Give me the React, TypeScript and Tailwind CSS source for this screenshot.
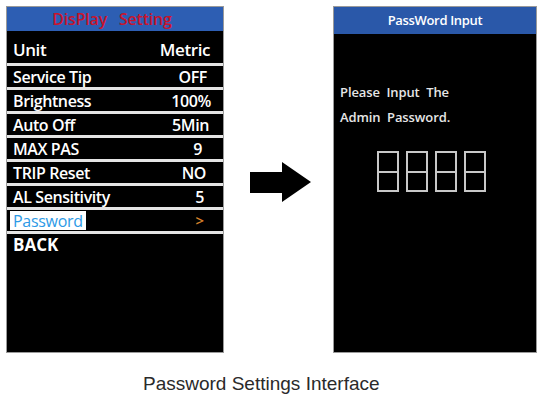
const ROWS = [
  { label: "Service Tip", value: "OFF", pr: "pr-[16px]" },
  { label: "Brightness", value: "100%", pr: "pr-[12px]" },
  { label: "Auto Off", value: "5Min", pr: "pr-[14px]" },
  { label: "MAX PAS", value: "9", pr: "pr-[21px]" },
  { label: "TRIP Reset", value: "NO", pr: "pr-[17px]" },
  { label: "AL Sensitivity", value: "5", pr: "pr-[19px]" },
];

function DigitBox() {
  return (
    <div className="w-[22px] h-[41px] border-2 border-[#c8c8c8] flex flex-col">
      <div className="flex-1 border-b-2 border-[#c8c8c8]" />
      <div className="flex-1" />
    </div>
  );
}

export default function App() {
  return (
    <div className="w-[550px] h-[404px] bg-white overflow-hidden" style={{ fontFamily: '"Open Sans", "Noto Sans", sans-serif' }}>
      <div className="flex items-start pt-[6px] pl-[6px]">
        {/* left screen */}
        <div className="w-[218px] h-[347px] bg-[#e4e4e4] border border-[#9a9a9a] flex flex-col gap-[3px]">
          <div className="h-[24px] -mb-[3px] bg-[#2d5eb3] flex items-center justify-center pr-[6px] text-[#c8142c] text-[16px] font-semibold tracking-[-0.2px]">
            DisPlay&nbsp;&nbsp;&nbsp;Setting
          </div>
          <div className="h-[32px] bg-black flex items-end justify-between pl-[6px] pr-[13px] pb-[1px] text-white text-[17px] font-semibold tracking-tight">
            <span>Unit</span>
            <span>Metric</span>
          </div>
          {ROWS.map(r => (
            <div key={r.label} className={`h-[21px] bg-black flex items-center justify-between pl-[6px] ${r.pr} text-white text-[16px] font-semibold tracking-[-0.4px] leading-none`}>
              <span>{r.label}</span>
              <span>{r.value}</span>
            </div>
          ))}
          <div className="h-[21px] bg-black flex items-center justify-between pl-[3px] pr-[19px]">
            <span className="bg-white h-[19px] w-[76px] flex items-center pl-[3px] text-[#2d9ae6] text-[16px] tracking-[-0.3px] leading-none">Password</span>
            <span className="text-[#d9822b] text-[15px] font-semibold">&gt;</span>
          </div>
          <div className="flex-1 bg-black pl-[6px] pt-[1px] text-white text-[17px] font-bold leading-[20px]">
            BACK
          </div>
        </div>

        {/* arrow */}
        <div className="w-[109px] flex justify-center pt-[156px] pl-[3px]">
          <svg width="61" height="40" viewBox="0 0 61 40">
            <polygon points="0,10 32,10 32,0 61,20 32,40 32,31 0,31" fill="#000" />
          </svg>
        </div>

        {/* right screen */}
        <div className="w-[204px] h-[347px] bg-black border border-[#9a9a9a] flex flex-col">
          <div className="h-[27px] bg-[#2a58a9] flex items-center justify-center text-white text-[13px] font-semibold tracking-tight">
            PassWord Input
          </div>
          <div className="pl-[6px] pt-[46px] text-[#e6e6e6] text-[13px] font-semibold leading-[25px] tracking-[-0.1px]">
            <div>Please&nbsp; Input&nbsp; The</div>
            <div>Admin&nbsp; Password.</div>
          </div>
          <div className="flex gap-[7px] pl-[43px] pt-[21px]">
            <DigitBox />
            <DigitBox />
            <DigitBox />
            <DigitBox />
          </div>
        </div>
      </div>

      <div className="pl-[143px] pt-[17px] text-[19px] text-[#2a2a2a]" style={{ fontFamily: '"Liberation Sans", Arial, sans-serif' }}>
        Password Settings Interface
      </div>
    </div>
  );
}
